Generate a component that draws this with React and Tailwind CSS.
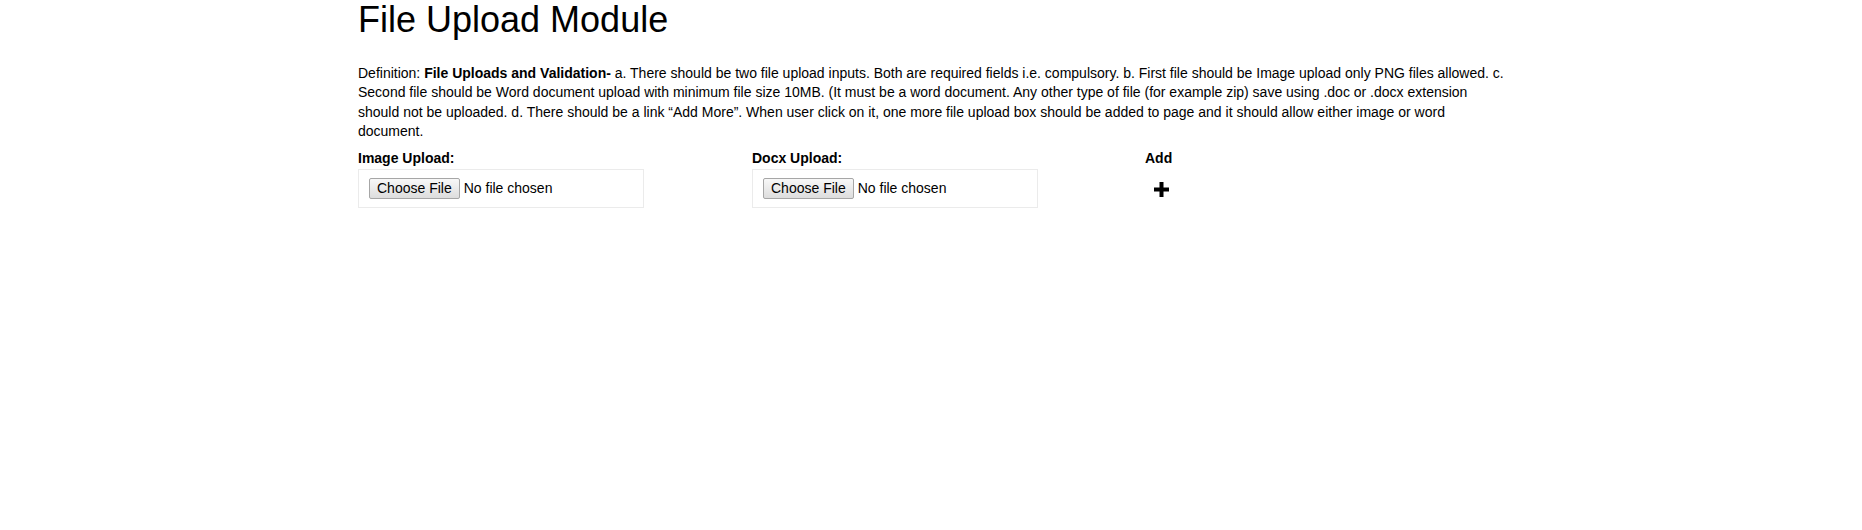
import React from "react";

const font = { fontFamily: '"Liberation Sans", Arial, Helvetica, sans-serif' };

function FileField() {
  return (
    <div className="flex items-center w-[286px] h-[39px] border border-[#ebebeb] pl-[10px]">
      <label className="flex items-center cursor-pointer">
        <span className="h-[21px] px-[7px] flex items-center border border-[#a6a6a6] rounded-[2px] bg-gradient-to-b from-[#f8f8f8] to-[#dddddd] text-[14px] text-black">
          Choose File
        </span>
        <span className="ml-[4px] text-[14px] text-black">No file chosen</span>
        <input type="file" className="hidden" />
      </label>
    </div>
  );
}

export default function App() {
  return (
    <div className="w-full min-h-[530px] bg-white text-black" style={font}>
      <div className="ml-[358px] w-[1150px]">
        <h1 className="text-[36px] leading-[40px] font-normal">File Upload Module</h1>

        <p className="mt-[24px] text-[14px] leading-[19.3px]">
          Definition: <b>File Uploads and Validation-</b> a. There should be two file upload inputs. Both are
          required fields i.e. compulsory. b. First file should be Image upload only PNG files allowed. c. Second
          file should be Word document upload with minimum file size 10MB. (It must be a word document. Any other
          type of file (for example zip) save using .doc or .docx extension should not be uploaded. d. There should
          be a link “Add More”. When user click on it, one more file upload box should be added to page and it
          should allow either image or word document.
        </p>

        <div className="mt-[7px] flex">
          <div className="w-[394px]">
            <div className="text-[14px] leading-[21px] font-bold">Image Upload:</div>
            <FileField />
          </div>
          <div className="w-[393px]">
            <div className="text-[14px] leading-[21px] font-bold">Docx Upload:</div>
            <FileField />
          </div>
          <div className="w-[120px]">
            <div className="text-[14px] leading-[21px] font-bold">Add</div>
            <a href="#" className="mt-[13px] ml-[9px] block w-[15px] h-[15px]" aria-label="Add More">
              <svg width="15" height="15" viewBox="0 0 15 15">
                <rect x="5.5" y="0" width="4" height="15" fill="#000" />
                <rect x="0" y="5.5" width="15" height="4" fill="#000" />
              </svg>
            </a>
          </div>
        </div>
      </div>
    </div>
  );
}
